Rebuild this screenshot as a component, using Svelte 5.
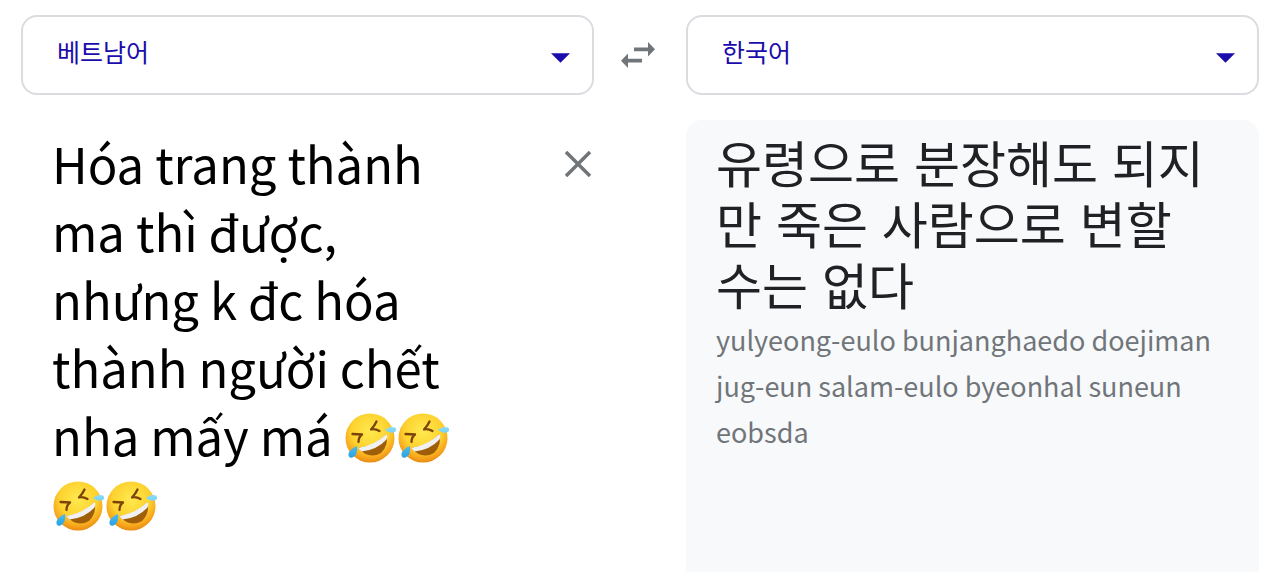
<script>
	const languages = ['베트남어', '한국어'];

	let from = $state('베트남어');
	let to = $state('한국어');
	let source = $state('Hóa trang thành ma thì được, nhưng k đc hóa thành người chết nha mấy má');
	let laughs = $state(4);

	const translation = '유령으로 분장해도 되지만 죽은 사람으로 변할 수는 없다';
	const romanization = 'yulyeong-eulo bunjanghaedo doejiman jug-eun salam-eulo byeonhal suneun eobsda';

	function swap() {
		[from, to] = [to, from];
	}

	function clear() {
		source = '';
		laughs = 0;
	}
</script>

<svg class="defs" width="0" height="0" aria-hidden="true">
	<defs>
		<radialGradient id="face" cx="50%" cy="36%" r="64%">
			<stop offset="0" stop-color="#ffe94f" />
			<stop offset="0.6" stop-color="#fdd22f" />
			<stop offset="0.86" stop-color="#f7a51c" />
			<stop offset="1" stop-color="#e88a12" />
		</radialGradient>
		<linearGradient id="tear" x1="0" y1="0" x2="0" y2="1">
			<stop offset="0" stop-color="#8bdcf8" />
			<stop offset="1" stop-color="#27a4e4" />
		</linearGradient>
	</defs>
</svg>

<main class="translator">
	<div class="languages">
		<div class="picker">
			<select bind:value={from} aria-label="출발 언어">
				{#each languages as language}
					<option>{language}</option>
				{/each}
			</select>
			<svg class="caret" viewBox="0 0 20 10" aria-hidden="true"><path d="M0 0h20L10 10z" /></svg>
		</div>

		<button class="swap" onclick={swap} aria-label="언어 전환">
			<svg viewBox="0 0 34 26" aria-hidden="true">
				<path d="M13 5.500h14V0l7 7.300-7 7.200V9.200H13zM21 16.800H7v-5.300l-7 7.200L7 26v-5.500h14z" />
			</svg>
		</button>

		<div class="picker">
			<select bind:value={to} aria-label="도착 언어">
				{#each languages as language}
					<option>{language}</option>
				{/each}
			</select>
			<svg class="caret" viewBox="0 0 20 10" aria-hidden="true"><path d="M0 0h20L10 10z" /></svg>
		</div>
	</div>

	<div class="panes">
		<section class="source">
			<div class="input" contenteditable="true" role="textbox" tabindex="0" aria-multiline="true" aria-label="원본 텍스트" spellcheck="false">
				{source}
				{#each { length: laughs } as _}
					<svg class="rofl" viewBox="0 0 53 52" role="img" aria-label="🤣">
						<circle cx="26" cy="27" r="24.500" fill="url(#face)" />
						<path d="M8.500 23L18 23.500Q14.500 26 14.500 31M32.500 10.500Q30.500 15 27 18.500Q31 17.500 35.500 20" fill="none" stroke="#7b4308" stroke-width="2.300" stroke-linecap="round" stroke-linejoin="round" />
						<path d="M14 37Q31 35 42.500 23Q45 34 37 42Q25 49 14 37z" fill="#9f5f0a" />
						<path d="M14 37Q31 34 42.500 23Q44 25 42.500 28.500Q33 39 17.500 40.500z" fill="#f1f1f4" />
						<path d="M41 19Q46 14.500 51 16.500Q53 18 51.500 20.500Q47 23.500 41 19zM13 35Q6 38 4.500 42.500Q4 47.500 8.500 46.500Q14 44.500 13 35z" fill="url(#tear)" />
					</svg>
				{/each}
			</div>
			<button class="clear" onclick={clear} aria-label="원본 텍스트 지우기">
				<svg viewBox="0 0 28 28" aria-hidden="true"><path d="M2 2l24 24M26 2L2 26" /></svg>
			</button>
		</section>

		<section class="result">
			<p class="translation">{translation}</p>
			<p class="romanization">{romanization}</p>
		</section>
	</div>
</main>

<style>
:global(body) {
	margin: 0;
	background: #fff;
}

.defs {
	position: absolute;
}

.translator {
	box-sizing: border-box;
	display: flex;
	flex-direction: column;
	gap: 25px;
	min-height: 100vh;
	padding: 15px 21px 0;
	font-family: 'Noto Sans CJK KR', sans-serif;
}

button {
	display: flex;
	align-items: center;
	justify-content: center;
	padding: 0;
	border: none;
	background: none;
	cursor: pointer;
}

/* LANGUAGE BAR */
.languages {
	display: flex;
}
.picker {
	position: relative;
	flex: 1;
}
select {
	appearance: none;
	box-sizing: border-box;
	display: block;
	width: 100%;
	height: 80px;
	padding: 0 60px 8px 34px;
	border: 2px solid #dadce0;
	border-radius: 16px;
	background: #fff;
	color: #1a0dab;
	font-family: inherit;
	font-size: 25px;
}
.caret {
	position: absolute;
	top: 38px;
	right: 24px;
	width: 19px;
	height: 10px;
	fill: #1a0dab;
	pointer-events: none;
}
.swap {
	width: 92px;
	padding-right: 4px;
}
.swap svg {
	width: 34px;
	height: 26px;
	fill: #70757a;
}

/* PANES */
.panes {
	flex: 1;
	display: grid;
	grid-template-columns: 1fr 1fr;
	gap: 92px;
}
.source {
	display: flex;
	align-items: flex-start;
	justify-content: space-between;
}
.input {
	width: 420px;
	padding: 9px 0 0 31px;
	outline: none;
	color: #000;
	font-size: 49px;
	line-height: 68px;
}
.rofl {
	width: 53px;
	height: 52px;
	vertical-align: -7px;
}
.clear {
	width: 32px;
	height: 32px;
	margin-top: 28px;
}
.clear svg {
	width: 28px;
	height: 28px;
	fill: none;
	stroke: #70757a;
	stroke-width: 3.500;
}
.result {
	padding: 16px 30px;
	border-radius: 16px 16px 0 0;
	background: #f8f9fa;
}
.result p {
	margin: 0;
}
.translation {
	color: #202124;
	font-family: 'Liberation Sans', 'Noto Sans CJK KR', sans-serif;
	font-size: 50px;
	line-height: 61px;
	word-break: break-all;
}
.result .romanization {
	margin-top: -2px;
	color: #70757a;
	font-size: 27px;
	line-height: 46px;
}
</style>
